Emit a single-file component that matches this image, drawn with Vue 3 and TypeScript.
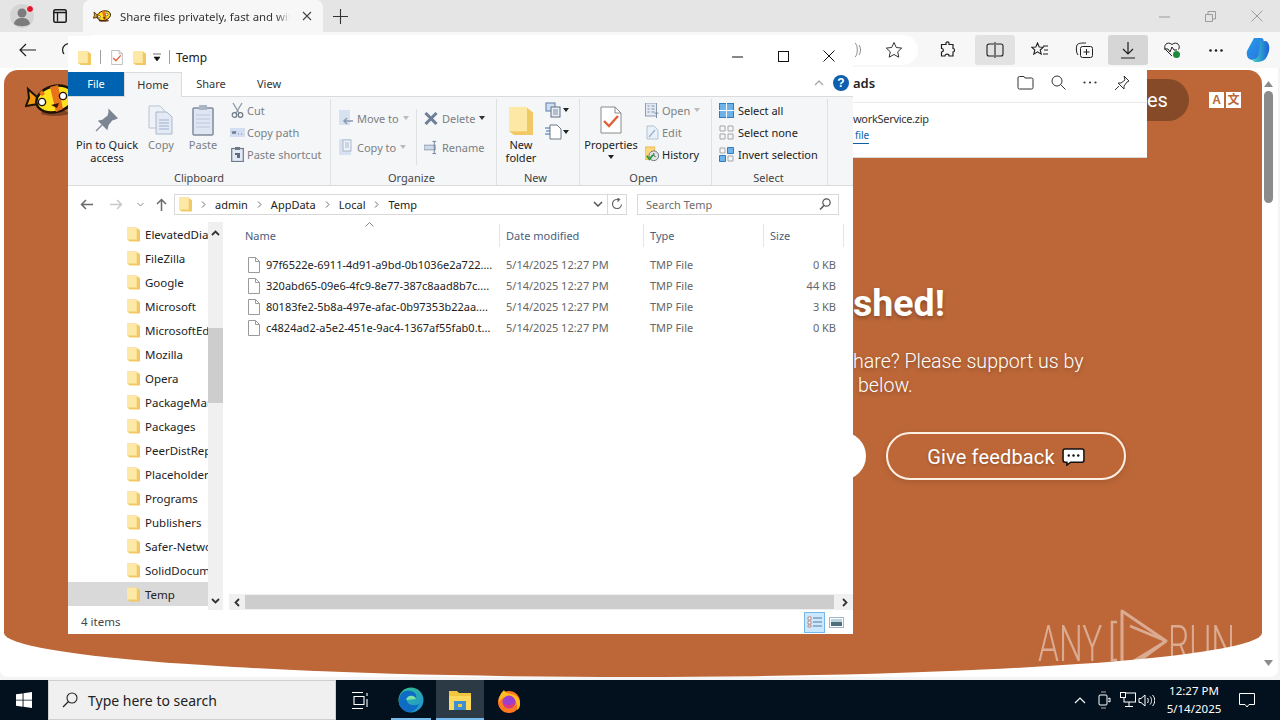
<script setup lang="ts">
// Explorer data
const navFolders = [
  'ElevatedDiagnostics', 'FileZilla', 'Google', 'Microsoft', 'MicrosoftEdge', 'Mozilla', 'Opera',
  'PackageManagement', 'Packages', 'PeerDistRepub', 'Placeholders', 'Programs', 'Publishers',
  'Safer-Networking', 'SolidDocuments', 'Temp',
]

const files = [
  { name: '97f6522e-6911-4d91-a9bd-0b1036e2a722....', size: '0 KB' },
  { name: '320abd65-09e6-4fc9-8e77-387c8aad8b7c....', size: '44 KB' },
  { name: '80183fe2-5b8a-497e-afac-0b97353b22aa....', size: '3 KB' },
  { name: 'c4824ad2-a5e2-451e-9ac4-1367af55fab0.t...', size: '0 KB' },
]

const crumbs = ['admin', 'AppData', 'Local', 'Temp']
</script>

<template>
  <div class="desktop">
    <svg class="defs" width="0" height="0">
      <symbol id="folder" viewBox="0 0 14 16">
        <path d="M0 1h10l4 3v12H3l-3-2z" fill="#f0c965" />
        <path d="M0 1h10.500v13H0z" fill="#fde8a6" />
      </symbol>
      <symbol id="file" viewBox="0 0 14 16">
        <path d="M1.500.5h7l4 4v11h-11z" fill="#fff" stroke="#9a9a9a" />
        <path d="M8.500.5v4h4" fill="none" stroke="#9a9a9a" />
      </symbol>
      <symbol id="candy" viewBox="0 0 50 34">
        <ellipse cx="30" cy="30" rx="14" ry="3" fill="#7d4322" />
        <path d="M13 15L3 6l1 9-3 8 12-2z" fill="#f39a12" stroke="#1d1208" stroke-width="2" />
        <ellipse cx="30" cy="16" rx="19" ry="13" fill="#ffe11e" stroke="#1d1208" stroke-width="2.500" transform="rotate(-15 30 16)" />
        <path d="M25 4l8-2 5 24-7 3z" fill="#e8731a" />
        <path d="M14 10l3-3 3 4-3 2z" fill="#e8731a" />
        <circle cx="17" cy="19" r="3.600" fill="#fff" stroke="#1d1208" stroke-width="1.400" />
        <circle cx="38" cy="13" r="3.600" fill="#fff" stroke="#1d1208" stroke-width="1.400" />
        <path d="M26 22l8-2-2 5z" fill="#3a1505" />
      </symbol>
      <symbol id="checkdoc" viewBox="0 0 22 28">
        <path d="M1 1h14l6 6v20H1z" fill="#fff" stroke="#8a8a8a" />
        <path d="M15 1v6h6" fill="none" stroke="#8a8a8a" />
        <path d="M4 15l5 5 9-10" fill="none" stroke="#e0603a" stroke-width="2.400" />
      </symbol>
    </svg>

    <div class="browser">
      <div class="tabstrip">
        <div class="profile">
          <svg width="26" height="26" viewBox="0 0 26 26">
            <circle cx="12" cy="13" r="12" fill="#d4d4d4" />
            <circle cx="12" cy="10" r="4.500" fill="#7c7c7c" />
            <path d="M4 21c1-5 4-6 8-6s7 1 8 6c-4 3-12 3-16 0z" fill="#7c7c7c" />
            <circle cx="20" cy="6" r="3.500" fill="#e0162b" stroke="#eee" />
          </svg>
        </div>
        <svg class="vtabs" width="14" height="14" viewBox="0 0 14 14">
          <rect x=".8" y=".8" width="12.400" height="12.400" rx="1.500" fill="none" stroke="#1a1a1a" stroke-width="1.500" />
          <path d="M1 3.500h12M4.500 3.500v9" stroke="#1a1a1a" stroke-width="1.300" fill="none" />
        </svg>
        <div class="tab">
          <svg width="18" height="14"><use href="#candy" /></svg>
          <span class="tab-title">Share files privately, fast and with</span>
          <svg class="tab-close" width="10" height="10" viewBox="0 0 10 10"><path d="M1 1l8 8M9 1l-8 8" stroke="#444" stroke-width="1.100" /></svg>
        </div>
        <svg class="newtab" width="15" height="15" viewBox="0 0 15 15"><path d="M7.500 0v15M0 7.500h15" stroke="#333" stroke-width="1.100" /></svg>
        <div class="winctl">
          <svg width="11" height="11" viewBox="0 0 11 11"><path d="M0 6h11" stroke="#9b9b9b" /></svg>
          <svg width="11" height="11" viewBox="0 0 11 11"><path d="M.5 3.500h7v7h-7zM3 3V.5h7.500V8H8" fill="none" stroke="#9b9b9b" /></svg>
          <svg width="12" height="12" viewBox="0 0 12 12"><path d="M.5.5l11 11M11.500.5l-11 11" stroke="#9b9b9b" /></svg>
        </div>
      </div>

      <div class="toolbar">
        <svg class="back" width="18" height="14" viewBox="0 0 18 14"><path d="M17 7H1M7 1L1 7l6 6" fill="none" stroke="#1f1f1f" stroke-width="1.200" /></svg>
        <svg class="reload" width="14" height="14" viewBox="0 0 14 14"><path d="M12 3A6 6 0 102 11" fill="none" stroke="#1f1f1f" stroke-width="1.200" /></svg>
        <div class="urlbar">
          <svg width="14" height="16" viewBox="0 0 14 16"><path d="M2 3c2 1 2 9 0 10M6 1c3 2 3 12 0 14M10 3c2 2 2 8 0 10" fill="none" stroke="#8f8f8f" /></svg>
          <svg width="18" height="18" viewBox="0 0 18 18"><path d="M9 1.500l2.300 5 5.400.6-4 3.700 1.100 5.400L9 13.500l-4.800 2.700 1.100-5.400-4-3.700 5.400-.6z" fill="none" stroke="#333" /></svg>
        </div>
        <div class="tb-btn first">
          <svg width="18" height="18" viewBox="0 0 18 18"><path d="M7 2c0-1.500 3-1.500 3 0v1.500h4v4c2 0 2 3.500 0 3.500v4H10c0-2.500-4-2.500-4 0H2.500v-4c2.500 0 2.500-3.500 0-3.500v-4H7z" fill="none" stroke="#1f1f1f" stroke-width="1.200" /></svg>
        </div>
        <div class="tb-btn on split">
          <svg width="18" height="16" viewBox="0 0 18 16"><path d="M9 0v16M8 2H3a2 2 0 00-2 2v8a2 2 0 002 2h5M10 2h5a2 2 0 012 2v8a2 2 0 01-2 2h-5" fill="none" stroke="#1f1f1f" stroke-width="1.100" /></svg>
        </div>
        <div class="tb-btn fav">
          <svg width="18" height="16" viewBox="0 0 18 16"><path d="M6.500 1l1.700 4 4 .3-3 2.700 1 4.200-3.700-2.300-3.700 2.300 1-4.200-3-2.700 4-.3zM12 4h5M13 8h4M12 12h5" fill="none" stroke="#1f1f1f" stroke-width="1.100" /></svg>
        </div>
        <div class="tb-btn">
          <svg width="18" height="16" viewBox="0 0 18 16"><rect x="5.500" y="4.500" width="12" height="11" rx="2" fill="#f7f7f7" stroke="#1f1f1f" /><path d="M11.500 7v6M8.500 10h6M3 13C1 11 1 5 2 3c1-2 5-2 9-2" fill="none" stroke="#1f1f1f" /></svg>
        </div>
        <div class="tb-btn on dl">
          <svg width="14" height="18" viewBox="0 0 14 18"><path d="M7 1v12M2 8l5 5 5-5M0 17h14" fill="none" stroke="#1f1f1f" stroke-width="1.200" /></svg>
        </div>
        <div class="tb-btn">
          <svg width="18" height="18" viewBox="0 0 18 18"><path d="M9 15L2.500 8.500C0 5 4-.5 9 3.500c5-4 9 1.500 6.500 5" fill="none" stroke="#1f1f1f" /><path d="M1 8h4l2 3 2-5 2 3h3" fill="none" stroke="#1f1f1f" /><circle cx="13.500" cy="13.500" r="3.500" fill="#1e8a3c" /></svg>
        </div>
        <div class="tb-btn dots">
          <svg width="14" height="3" viewBox="0 0 14 3"><circle cx="1.500" cy="1.500" r="1.300" fill="#1f1f1f" /><circle cx="7" cy="1.500" r="1.300" fill="#1f1f1f" /><circle cx="12.500" cy="1.500" r="1.300" fill="#1f1f1f" /></svg>
        </div>
        <div class="tb-btn copilot">
          <svg width="24" height="26" viewBox="0 0 24 26">
            <defs>
              <linearGradient id="cp1" x1="0" y1="0" x2="1" y2="1"><stop offset="0" stop-color="#1fa0e8" /><stop offset="1" stop-color="#2f6fe0" /></linearGradient>
              <linearGradient id="cp2" x1="0" y1="0" x2="1" y2="0"><stop offset="0" stop-color="#3fd6c0" /><stop offset="1" stop-color="#1a5fd8" /></linearGradient>
            </defs>
            <path d="M8 1h7c3 0 3 3 2 6l-4 12c-1 3-3 4-6 4C2 23 0 19 1 14z" fill="url(#cp1)" />
            <path d="M14 4h6c4 2 4 9 2 13-2 6-5 8-12 8-3 0-4-2-3-3 4 0 5-2 6-6z" fill="url(#cp2)" />
          </svg>
        </div>
      </div>

      <div class="page">
        <div class="panel">
          <div class="site-head">
            <svg class="logo" width="50" height="34"><use href="#candy" /></svg>
            <div class="lang-pill">es</div>
            <div class="translate">
              <span class="tr-a">A</span><span class="tr-b">文</span>
            </div>
          </div>
          <div class="hero">
            <h1>shed!</h1>
            <p>hare? Please support us by<br /><span class="indent">below.</span></p>
            <div class="actions">
              <span class="white-pill"></span>
              <button class="feedback">
                Give feedback
                <svg width="23" height="18" viewBox="0 0 24 19">
                  <path d="M3 1h18a2 2 0 012 2v10a2 2 0 01-2 2H9l-4 3v-3H3a2 2 0 01-2-2V3a2 2 0 012-2z" fill="#fff" stroke="#111" stroke-width="1.600" />
                  <circle cx="7" cy="8" r="1.300" fill="#111" /><circle cx="12" cy="8" r="1.300" fill="#111" /><circle cx="17" cy="8" r="1.300" fill="#111" />
                </svg>
              </button>
            </div>
          </div>
        </div>
        <div class="page-scroll">
          <svg width="9" height="6" viewBox="0 0 9 6"><path d="M4.500 0L9 6H0z" fill="#8b8b8b" /></svg>
          <div class="page-thumb"></div>
          <svg class="down" width="9" height="6" viewBox="0 0 9 6"><path d="M4.500 6L9 0H0z" fill="#8b8b8b" /></svg>
        </div>
      </div>
    </div>

    <div class="downloads">
      <div class="dl-head">
        <strong>ads</strong>
        <div class="dl-icons">
          <svg width="17" height="15" viewBox="0 0 17 15"><path d="M1 3a1.500 1.500 0 011.500-1.500H7L8 3h6.500A1.500 1.500 0 0116 4.500v8a1.500 1.500 0 01-1.500 1.500h-12A1.500 1.500 0 011 12.500z" fill="none" stroke="#333" /></svg>
          <svg width="15" height="15" viewBox="0 0 15 15"><circle cx="6" cy="6" r="5" fill="none" stroke="#333" /><path d="M9.500 9.500l5 5" stroke="#333" /></svg>
          <svg width="14" height="3" viewBox="0 0 14 3"><circle cx="1.500" cy="1.500" r="1.100" fill="#333" /><circle cx="7" cy="1.500" r="1.100" fill="#333" /><circle cx="12.500" cy="1.500" r="1.100" fill="#333" /></svg>
          <svg width="16" height="16" viewBox="0 0 16 16"><path d="M10 1l5 5-2 1-3 4 0 3-6-6 3 0 4-3zM5 11l-4 4" fill="none" stroke="#333" /></svg>
        </div>
      </div>
      <div class="dl-item">
        <div class="dl-name">workService.zip</div>
        <a class="dl-link">file</a>
      </div>
    </div>

    <section class="explorer">
      <div class="ex-title">
        <svg width="13" height="15"><use href="#folder" /></svg>
        <i class="vsep"></i>
        <svg class="t-doc" width="12" height="15"><use href="#checkdoc" /></svg>
        <svg width="13" height="15"><use href="#folder" /></svg>
        <svg class="t-arrow" width="8" height="8" viewBox="0 0 8 8"><path d="M0 1h8M1 4h6L4 8z" fill="#111" stroke="#111" stroke-width=".6" /></svg>
        <i class="vsep"></i>
        <span class="ex-name">Temp</span>
        <div class="ex-ctl">
          <svg width="11" height="11" viewBox="0 0 11 11"><path d="M0 6h11" stroke="#111" /></svg>
          <svg width="11" height="11" viewBox="0 0 11 11"><rect x=".5" y=".5" width="10" height="10" fill="none" stroke="#111" /></svg>
          <svg width="12" height="12" viewBox="0 0 12 12"><path d="M.5.5l11 11M11.500.5l-11 11" stroke="#111" /></svg>
        </div>
      </div>

      <div class="ex-tabs">
        <span class="rt file">File</span>
        <span class="rt home">Home</span>
        <span class="rt share">Share</span>
        <span class="rt view">View</span>
        <svg class="collapse" width="10" height="6" viewBox="0 0 10 6"><path d="M1 5l4-4 4 4" fill="none" stroke="#a8a8a8" stroke-width="1.300" /></svg>
        <span class="help">?</span>
      </div>

      <div class="ribbon">
        <div class="rgroup g-clip">
          <div class="rbody">
            <div class="big w-pin">
              <div class="bi"><svg width="24" height="24" viewBox="0 0 24 24"><path d="M14 2l8 8-2 1-3 1-4 5-1 4-8-8 4-1 5-4 1-3zM7 17l-6 6" fill="#7b8692" stroke="#7b8692" stroke-width="1.200" /></svg></div>
              <span class="dark">Pin to Quick<br />access</span>
            </div>
            <div class="big w-copy">
              <div class="bi"><svg width="26" height="30" viewBox="0 0 26 30"><path d="M1 1h11l4 4v18H1z" fill="#eef2f8" stroke="#b9c4d4" /><path d="M8 7h11l5 5v17H8z" fill="#e3eaf5" stroke="#a9b8cc" /><path d="M11 15h10M11 18h10M11 21h10M11 24h10" stroke="#9fb1ca" /></svg></div>
              <span>Copy</span>
            </div>
            <div class="big w-paste">
              <div class="bi"><svg width="22" height="31" viewBox="0 0 22 31"><rect x="1" y="3" width="20" height="27" rx="1" fill="#dfe6f3" stroke="#7f8c9c" stroke-width="1.500" /><rect x="7" y="0" width="8" height="5" fill="#aab6c6" /><path d="M4 10h14M4 14h14M4 18h14M4 22h14" stroke="#bcc8da" /></svg></div>
              <span>Paste</span>
            </div>
            <div class="scol w-clipsmall">
              <div class="si"><svg width="13" height="16" viewBox="0 0 13 16"><path d="M2 1l6 10M11 1L5 11" stroke="#8b97a6" stroke-width="1.300" /><circle cx="3.500" cy="13" r="2.300" fill="none" stroke="#6d7986" stroke-width="1.200" /><circle cx="9.500" cy="13" r="2.300" fill="none" stroke="#6d7986" stroke-width="1.200" /></svg>Cut</div>
              <div class="si"><svg width="15" height="9" viewBox="0 0 15 9"><rect width="15" height="9" fill="#d3def0" /><path d="M2 3l1 3 1-3 1 3 1-3M8 6h1M11 6h1" stroke="#6b7f9c" fill="none" /></svg>Copy path</div>
              <div class="si"><svg width="13" height="15" viewBox="0 0 13 15"><rect x=".7" y="1.500" width="11.600" height="13" fill="#e3eaf5" stroke="#6d7986" stroke-width="1.200" /><rect x="4" y="0" width="5" height="3" fill="#6d7986" /><path d="M4 6h5v5H6V8H4z" fill="#5b6b80" /></svg>Paste shortcut</div>
            </div>
          </div>
          <div class="rlabel">Clipboard</div>
        </div>

        <div class="rgroup g-org">
          <div class="rbody">
            <div class="scol two w-mv">
              <div class="si"><svg width="14" height="16" viewBox="0 0 14 16"><rect width="11" height="15" fill="#d7e1f0" /><path d="M14 11H6M8 8l-3 3 3 3" stroke="#8b9bb0" stroke-width="1.500" fill="none" /></svg>Move to <b class="caret faint"></b></div>
              <div class="si"><svg width="14" height="16" viewBox="0 0 14 16"><rect width="12" height="16" fill="#d7e1f0" /><rect x="4" y="1" width="8" height="11" fill="#eef2f8" stroke="#a9b8cc" /><path d="M6 4h4M6 6h4M6 8h4" stroke="#a9b8cc" /></svg>Copy to <b class="caret faint"></b></div>
            </div>
            <i class="rsep"></i>
            <div class="scol two w-del">
              <div class="si"><svg width="14" height="13" viewBox="0 0 14 13"><path d="M1.500 1l11 11M12.500 1l-11 11" stroke="#6d7f97" stroke-width="3" /></svg>Delete <b class="caret"></b></div>
              <div class="si"><svg width="14" height="15" viewBox="0 0 15 15"><rect y="5" width="12" height="5" fill="#cfdbec" stroke="#8b9bb0" /><path d="M11 1v13M9 1h4M9 14h4" stroke="#6d7f97" fill="none" /></svg>Rename</div>
            </div>
          </div>
          <div class="rlabel">Organize</div>
        </div>

        <div class="rgroup g-new">
          <div class="rbody">
            <div class="big w-newf">
              <div class="bi"><svg width="24" height="30" viewBox="0 0 14 16" preserveAspectRatio="none"><use href="#folder" /></svg></div>
              <span class="dark">New<br />folder</span>
            </div>
            <div class="scol w-newi">
              <div class="si"><svg width="17" height="16" viewBox="0 0 17 16"><rect x="1" y="1" width="9" height="8" fill="#cfe0f2" stroke="#5c7da3" /><rect x="6" y="5" width="9" height="10" fill="#e9eef5" stroke="#5c6f85" /><path d="M8 8h5M8 10h5M8 12h5" stroke="#7d8fa5" /></svg><b class="caret dk"></b></div>
              <div class="si"><svg width="17" height="16" viewBox="0 0 17 16"><path d="M5 1h7l4 4v10H5z" fill="#fff" stroke="#6d7986" /><path d="M0 4h5M1 7h4M0 10h5" stroke="#2f6fb5" /></svg><b class="caret dk"></b></div>
            </div>
          </div>
          <div class="rlabel">New</div>
        </div>

        <div class="rgroup g-open">
          <div class="rbody">
            <div class="big w-prop">
              <div class="bi"><svg width="22" height="28"><use href="#checkdoc" /></svg></div>
              <span class="dark">Properties</span>
              <b class="caret dk"></b>
            </div>
            <div class="scol w-opn">
              <div class="si"><svg width="14" height="15" viewBox="0 0 14 15"><rect width="11" height="13" fill="#e3eaf5" stroke="#8b9bb0" /><path d="M2 3h2M2 6h2M2 9h2M6 3h3M6 6h3M6 9h3" stroke="#7d8fa5" /><path d="M11 9v6M9 11l2-2 2 2" stroke="#7d8fa5" fill="none" /></svg>Open <b class="caret faint"></b></div>
              <div class="si"><svg width="13" height="15" viewBox="0 0 13 15"><path d="M1 1h7l4 4v9H1z" fill="#e9f0f8" stroke="#b3c2d4" /><path d="M3 12l6-7" stroke="#9db6d4" stroke-width="1.500" /></svg>Edit</div>
              <div class="si dark"><svg width="17" height="16" viewBox="0 0 17 16"><rect width="11" height="14" fill="#fbd87a" stroke="#e8b64d" /><circle cx="10" cy="10" r="5.500" fill="#dfe3e8" stroke="#5e6b78" /><path d="M10 7v3l2 1" stroke="#333" fill="none" /><path d="M2 10l3 4 4-5" stroke="#2a9a35" stroke-width="2" fill="none" /></svg>History</div>
            </div>
          </div>
          <div class="rlabel">Open</div>
        </div>

        <div class="rgroup g-sel">
          <div class="rbody">
            <div class="scol w-sel">
              <div class="si dark"><svg width="15" height="15" viewBox="0 0 15 15"><rect x=".5" y=".5" width="14" height="14" fill="#6db2e8" stroke="#2f7cc0" /><path d="M7.500 0v15M0 7.500h15" stroke="#fff" /></svg>Select all</div>
              <div class="si dark"><svg width="15" height="15" viewBox="0 0 15 15"><path d="M1 1h5v5H1zM9 1h5v5H9zM1 9h5v5H1zM9 9h5v5H9z" fill="none" stroke="#a6a6a6" /></svg>Select none</div>
              <div class="si dark"><svg width="15" height="15" viewBox="0 0 15 15"><path d="M1 1h5v5H1zM9 9h5v5H9z" fill="none" stroke="#a6a6a6" /><path d="M8.500.5h6v6h-6zM.5 8.500h6v6h-6z" fill="#6db2e8" stroke="#2f7cc0" /></svg>Invert selection</div>
            </div>
          </div>
          <div class="rlabel">Select</div>
        </div>
      </div>

      <div class="ex-address">
        <svg class="nav-a" width="13" height="11" viewBox="0 0 13 11"><path d="M13 5.500H2M6 1L1.500 5.500 6 10" fill="none" stroke="#6a6a6a" stroke-width="1.500" /></svg>
        <svg class="nav-b" width="13" height="11" viewBox="0 0 13 11"><path d="M0 5.500h11M7 1l4.500 4.500L7 10" fill="none" stroke="#c9c9c9" stroke-width="1.500" /></svg>
        <svg class="nav-c" width="7" height="5" viewBox="0 0 7 5"><path d="M.5 1l3 3 3-3" fill="none" stroke="#8a8a8a" /></svg>
        <svg class="nav-d" width="11" height="13" viewBox="0 0 11 13"><path d="M5.500 13V2M1 6l4.500-4.500L10 6" fill="none" stroke="#6a6a6a" stroke-width="1.500" /></svg>
        <div class="addrbox">
          <svg width="13" height="16"><use href="#folder" /></svg>
          <template v-for="c in crumbs" :key="c">
            <svg class="cr" width="5" height="7" viewBox="0 0 5 7"><path d="M1 .5l3 3-3 3" fill="none" stroke="#6a6a6a" /></svg>
            <span>{{ c }}</span>
          </template>
          <svg class="addr-drop" width="10" height="6" viewBox="0 0 10 6"><path d="M1 1l4 4 4-4" fill="none" stroke="#555" stroke-width="1.500" /></svg>
          <i class="addr-sep"></i>
          <svg class="addr-ref" width="12" height="12" viewBox="0 0 12 12"><path d="M10.500 6.500A4.500 4.500 0 116 1.500h2M6.500 0l2 1.500-2 2" fill="none" stroke="#666" stroke-width="1.200" /></svg>
        </div>
        <div class="searchbox">
          <span>Search Temp</span>
          <svg width="12" height="12" viewBox="0 0 12 12"><circle cx="7.500" cy="4.500" r="3.700" fill="none" stroke="#555" stroke-width="1.200" /><path d="M5 7.500L1 11.500" stroke="#555" stroke-width="1.500" /></svg>
        </div>
      </div>

      <div class="ex-main">
        <aside class="navpane">
          <div class="navlist">
            <div v-for="f in navFolders" :key="f" class="navitem" :class="{ sel: f === 'Temp' }">
              <svg width="13" height="16"><use href="#folder" /></svg>
              <span>{{ f }}</span>
            </div>
          </div>
          <div class="navscroll">
            <svg class="arr" width="9" height="6" viewBox="0 0 9 6"><path d="M1 5l3.500-3.500L8 5" fill="none" stroke="#333" stroke-width="1.800" /></svg>
            <div class="navthumb"></div>
            <svg class="arr bottom" width="9" height="6" viewBox="0 0 9 6"><path d="M1 1l3.500 3.500L8 1" fill="none" stroke="#333" stroke-width="1.800" /></svg>
          </div>
        </aside>

        <div class="listpane">
          <div class="listinner">
            <svg class="sort" width="9" height="5" viewBox="0 0 9 5"><path d="M.5 4.500l4-4 4 4" fill="none" stroke="#8a8a8a" /></svg>
            <div class="row head">
              <span class="name-h">Name</span><span>Date modified</span><span>Type</span><span>Size</span>
            </div>
            <div v-for="f in files" :key="f.name" class="row item">
              <span class="fname"><svg width="14" height="16"><use href="#file" /></svg>{{ f.name }}</span>
              <span>5/14/2025 12:27 PM</span>
              <span>TMP File</span>
              <span class="size">{{ f.size }}</span>
            </div>
          </div>
          <div class="hscroll">
            <svg width="6" height="9" viewBox="0 0 6 9"><path d="M5 1L1.500 4.500 5 8" fill="none" stroke="#333" stroke-width="1.800" /></svg>
            <div class="hthumb"></div>
            <svg width="6" height="9" viewBox="0 0 6 9"><path d="M1 1l3.500 3.500L1 8" fill="none" stroke="#333" stroke-width="1.800" /></svg>
          </div>
        </div>
      </div>

      <div class="ex-status">
        <span>4 items</span>
        <div class="viewbtns">
          <span class="vb active"><svg width="16" height="12" viewBox="0 0 16 12"><path d="M1 1h3v3H1zM1 5h3v3H1zM1 9h3v2H1z" fill="#fff" stroke="#b58a8a" /><path d="M6 2h9M6 6h9M6 10h9" stroke="#5d7a96" /></svg></span>
          <span class="vb"><svg width="15" height="11" viewBox="0 0 15 11"><rect x=".5" y=".5" width="14" height="10" fill="#fff" stroke="#9db4c9" /><rect x="2" y="2" width="11" height="7" fill="#4f6f7d" /><path d="M2 2h11v3H2z" fill="#bcd3e0" /></svg></span>
        </div>
      </div>
    </section>

    <div class="taskbar">
      <div class="start">
        <svg width="16" height="16" viewBox="0 0 16 16"><path d="M0 2.300l6.600-.9v6.300H0zM7.500 1.300L16 0v7.700H7.500zM0 8.500h6.600v6.200L0 13.800zM7.500 8.500H16V16l-8.500-1.200z" fill="#fff" /></svg>
      </div>
      <div class="tsearch">
        <svg width="16" height="16" viewBox="0 0 16 16"><circle cx="10" cy="6" r="5" fill="none" stroke="#222" stroke-width="1.100" /><path d="M6.500 9.500L1 15" stroke="#222" stroke-width="1.300" /></svg>
        <span>Type here to search</span>
      </div>
      <div class="tapp tview">
        <svg width="16" height="17" viewBox="0 0 16 17"><path d="M0 .5h11M0 16.500h11M2 4.500h10v8H2zM15 1v3M15 7v8" fill="none" stroke="#fff" stroke-width="1.100" /></svg>
      </div>
      <div class="tapp run narrow">
        <svg width="26" height="26" viewBox="0 0 26 26">
          <defs>
            <linearGradient id="edgeA" x1="0" y1="0" x2="1" y2="1"><stop offset="0" stop-color="#36c58a" /><stop offset="1" stop-color="#1d8fd8" /></linearGradient>
          </defs>
          <circle cx="13" cy="13" r="12.500" fill="url(#edgeA)" />
          <path d="M1 14C1 6 7 2 13 4c5 1 6 5 5 8H9c-1 5 6 8 12 5-2 5-6 8-9 8-7 0-11-5-11-11z" fill="#0f6cc4" />
          <path d="M8 13c1-4 4-5 7-4s3 3 3 3z" fill="#7fe0a8" />
        </svg>
      </div>
      <div class="tapp run active">
        <svg width="24" height="21" viewBox="0 0 24 21">
          <path d="M1 1h8l2 2h12v16H1z" fill="#f4c63f" />
          <path d="M1 6h22v14H1z" fill="#ffd95e" />
          <path d="M6 11h12v9H6z" fill="#3d8fd1" />
          <path d="M10 14h4v3h-4z" fill="#f4c63f" />
        </svg>
      </div>
      <div class="tapp">
        <svg width="24" height="25" viewBox="0 0 24 25">
          <circle cx="12" cy="14" r="11" fill="#ff7a1f" />
          <path d="M7 2c1 3 4 3 7 4 6 1 9 5 9 10 0 3-1 5-3 6 1-8-3-13-9-13-4 0-7 1-9 5 0-6 2-9 5-12z" fill="#ffbd22" />
          <circle cx="12" cy="14" r="6.500" fill="#9b3fd1" />
          <path d="M6 15c3 3 9 3 12-1-1 5-4 6-6 6-3 0-5-2-6-5z" fill="#e8356e" />
        </svg>
      </div>
      <div class="tray">
        <svg width="12" height="7" viewBox="0 0 12 7"><path d="M1 6l5-5 5 5" fill="none" stroke="#fff" stroke-width="1.100" /></svg>
        <svg class="t2" width="13" height="18" viewBox="0 0 13 18"><path d="M3 1h5M3 17h5" stroke="#aaa" /><rect x="1" y="4" width="8" height="10" rx="1" fill="none" stroke="#fff" /><path d="M10 8l2-1v4l-2-1" fill="none" stroke="#fff" /></svg>
        <svg class="t3" width="16" height="16" viewBox="0 0 16 16"><rect x="4" y="1" width="11.500" height="9" fill="none" stroke="#fff" /><rect x=".5" y=".5" width="5" height="5" fill="#02111d" stroke="#fff" /><path d="M9 10v4M5 14.500h8" stroke="#fff" /></svg>
        <svg class="t4" width="17" height="13" viewBox="0 0 17 13"><path d="M1 4.500h2L7 1v11L3 8.500H1z" fill="none" stroke="#fff" /><path d="M9.500 4c1 1 1 4 0 5M12 2.500c2 2 2 6 0 8M14.500 1c3 3 3 8 0 11" fill="none" stroke="#fff" /></svg>
        <div class="clock"><span>12:27 PM</span><span>5/14/2025</span></div>
        <svg class="note" width="16" height="15" viewBox="0 0 16 15"><path d="M.5.500h15v11H10l-2 2.500-2-2.500H.5z" fill="none" stroke="#fff" /></svg>
      </div>
    </div>

    <div class="watermark">
      <span class="wm-any">ANY</span>
      <svg width="60" height="64" viewBox="0 0 60 64">
        <path d="M7 14H2v38h5" fill="none" stroke="#fff" stroke-width="2.500" />
        <path d="M12 60V3l44 30-30 22" fill="none" stroke="#fff" stroke-width="3" stroke-linejoin="round" />
        <path d="M12 60l44-27M20 18l36 15" fill="none" stroke="#fff" stroke-width="2.500" />
      </svg>
      <span class="wm-run">RUN</span>
    </div>
  </div>
</template>

<style>
html,
body {
  margin: 0;
  background: #fff;
}
</style>

<style scoped>
.desktop {
  position: relative;
  width: 1280px;
  height: 720px;
  display: flex;
  flex-direction: column;
  overflow: hidden;
  font-family: "Noto Sans", "Open Sans", sans-serif;
  font-size: 11px;
  color: #222;
}

.defs {
  position: absolute;
}

.browser {
  flex: 1;
  display: flex;
  flex-direction: column;
  min-height: 0;
  background: #f4f4f4;
}

.tabstrip {
  height: 32px;
  flex: none;
  display: flex;
  align-items: center;
  background: #e5e5e5;
}

.profile {
  width: 26px;
  margin-left: 10px;
  display: flex;
}

.vtabs {
  margin-left: 17px;
}

.tab {
  width: 240px;
  height: 32px;
  margin-left: 16px;
  padding-left: 10px;
  box-sizing: border-box;
  display: flex;
  align-items: center;
  background: #f7f7f7;
  border-radius: 7px 7px 0 0;
  position: relative;
}

.tab-title {
  margin-left: 9px;
  width: 170px;
  overflow: hidden;
  white-space: nowrap;
  font-size: 11.400px;
  color: #333;
  -webkit-mask-image: linear-gradient(90deg, #000 92%, transparent);
  mask-image: linear-gradient(90deg, #000 92%, transparent);
}

.tab-close {
  margin-left: 12px;
}

.newtab {
  margin-left: 10px;
}

.winctl {
  margin-left: auto;
  width: 104px;
  margin-right: 17px;
  display: flex;
  justify-content: space-between;
  align-items: center;
}

.toolbar {
  height: 36px;
  flex: none;
  display: flex;
  align-items: center;
  position: relative;
  background: #f7f7f7;
}

.back {
  margin-left: 19px;
  flex: none;
}

.reload {
  margin-left: 25px;
  flex: none;
}

.urlbar {
  margin-left: 4px;
  width: 838px;
  height: 30px;
  flex: none;
  background: #fff;
  border-radius: 15px;
  display: flex;
  align-items: center;
  justify-content: flex-end;
  gap: 22px;
  padding-right: 15px;
  box-sizing: border-box;
}

.tb-btn {
  width: 40px;
  height: 30px;
  margin-left: 4px;
  display: flex;
  align-items: center;
  justify-content: center;
  border-radius: 3px;
  flex: none;
}

.tb-btn.first {
  margin-left: 10px;
}

.tb-btn.split {
  margin-left: 7px;
}

.tb-btn.fav {
  margin-left: 5px;
}

.tb-btn.on {
  background: #e2e2e2;
}

.tb-btn.dl {
  background: #d6d6d6;
}

.tb-btn.copilot {
  margin-left: 2px;
}

.page {
  flex: 1;
  min-height: 0;
  display: flex;
  margin: 0 2px 3px 0;
  padding: 2px 0 0 4px;
  background: #fff;
  border-radius: 0 0 8px 8px;
}

.panel {
  width: 1258px;
  background: #bd6738;
  border-radius: 14px 14px 50% 50% / 14px 14px 44px 44px;
  color: #fff;
}

.site-head {
  display: flex;
  align-items: center;
  padding: 9px 21px 0;
}

.logo {
  margin-right: auto;
}

.lang-pill {
  width: 110px;
  height: 42px;
  line-height: 42px;
  background: #864a28;
  border-radius: 21px;
  box-sizing: border-box;
  padding-left: 68px;
  font: 20px/42px Roboto, sans-serif;
}

.translate {
  width: 32px;
  margin-left: 20px;
  display: flex;
  gap: 2px;
}

.translate span {
  width: 15px;
  height: 16px;
  background: #fff;
  color: #bd6738;
  font-size: 12px;
  font-weight: 700;
  line-height: 16px;
  text-align: center;
  font-family: "Liberation Sans", "Noto Sans CJK SC", sans-serif;
}

.hero {
  margin-left: 849px;
}

.hero h1 {
  margin: 160px 0 0;
  font: 700 37.500px/44px Roboto, sans-serif;
  text-shadow: 0 2px 4px rgba(0, 0, 0, 0.3);
}

.hero p {
  margin: 25px 0 0;
  font: 300 19.600px/24px Roboto, sans-serif;
  text-shadow: 0 2px 4px rgba(0, 0, 0, 0.3);
}

.indent {
  margin-left: 5px;
}

.actions {
  margin-top: 34px;
  display: flex;
  align-items: center;
}

.white-pill {
  width: 66px;
  height: 48px;
  margin-left: -53px;
  background: #fff;
  border-radius: 24px;
}

.feedback {
  width: 240px;
  height: 48px;
  margin-left: 20px;
  padding: 1px 0 0;
  border: 2px solid #fdf0e2;
  border-radius: 24px;
  background: transparent;
  color: #fff;
  font: 400 20px Roboto, sans-serif;
  letter-spacing: 0.15px;
  display: flex;
  align-items: center;
  justify-content: center;
  gap: 7px;
  box-shadow: 0 2px 6px rgba(0, 0, 0, 0.12);
  text-shadow: 0 1px 3px rgba(0, 0, 0, 0.25);
}

.page-scroll {
  flex: 1;
  display: flex;
  flex-direction: column;
  align-items: flex-start;
  padding: 11px 0 0 2px;
}

.page-thumb {
  width: 9px;
  height: 112px;
  margin-top: 4px;
  background: #8b8b8b;
  border-radius: 5px;
}

.page-scroll .down {
  margin-top: auto;
  margin-bottom: 11px;
}

/* Downloads flyout */
.downloads {
  position: absolute;
  left: 853px;
  top: 67px;
  width: 294px;
  height: 91px;
  background: #fff;
  border-bottom: 1px solid #d8d8d8;
  box-sizing: border-box;
  z-index: 1;
}

.dl-head {
  height: 36px;
  padding-bottom: 4px;
  box-sizing: border-box;
  display: flex;
  align-items: center;
  border-bottom: 1px solid #ebebeb;
  font-size: 13px;
}

.dl-head strong {
  font-weight: 600;
}

.dl-icons {
  margin-left: auto;
  margin-right: 17px;
  width: 113px;
  display: flex;
  justify-content: space-between;
  align-items: center;
}

.dl-item {
  font-size: 11px;
  color: #333;
}

.dl-name {
  margin-top: 8px;
  line-height: 16px;
  letter-spacing: -0.3px;
}

.dl-link {
  display: inline-block;
  margin-top: 1px;
  padding: 0 0 1px 2px;
  font-size: 10px;
  line-height: 14px;
  color: #0f5ea8;
  border-bottom: 1px solid #0f5ea8;
}

/* Explorer window */
.explorer {
  position: absolute;
  left: 68px;
  top: 36px;
  width: 785px;
  height: 598px;
  background: #fff;
  display: flex;
  flex-direction: column;
  z-index: 2;
}

.ex-title {
  height: 36px;
  flex: none;
  box-sizing: border-box;
  display: flex;
  align-items: center;
  padding: 6px 0 0 10px;
  font-size: 12px;
}

.vsep {
  width: 1px;
  height: 14px;
  background: #a0a0a0;
  margin: 0 9px;
}

.t-arrow + .vsep {
  margin-left: 8px;
}

.t-doc {
  margin: 0 10px 0 1px;
}

.t-arrow {
  margin-left: 7px;
}

.ex-name {
  margin-left: -3px;
}

.ex-ctl {
  margin-left: auto;
  margin-right: 18px;
  margin-top: -2px;
  width: 103px;
  display: flex;
  justify-content: space-between;
  align-items: center;
}

.ex-tabs {
  height: 24px;
  flex: none;
  display: flex;
  align-items: stretch;
  position: relative;
  z-index: 1;
}

.rt {
  line-height: 24px;
  text-align: center;
  color: #333;
}

.rt.file {
  width: 56px;
  background: #0063b1;
  color: #fff;
}

.rt.home {
  width: 58px;
  box-sizing: border-box;
  background: #f5f6f7;
  border: 1px solid #dadbdc;
  border-bottom: none;
  height: 25px;
}

.rt.share {
  width: 58px;
}

.rt.view {
  width: 58px;
}

.collapse {
  margin: 8px 0 0 auto;
}

.help {
  width: 16px;
  height: 16px;
  margin: 3px 4px 0 9px;
  border-radius: 50%;
  background: #0e5fb0;
  color: #fff;
  font: 700 12px/16px "Liberation Sans", sans-serif;
  text-align: center;
}

.ribbon {
  height: 90px;
  flex: none;
  box-sizing: border-box;
  display: flex;
  background: #f5f6f7;
  border-top: 1px solid #dadbdc;
  border-bottom: 1px solid #dadbdc;
}

.rgroup {
  display: flex;
  flex-direction: column;
  box-sizing: border-box;
  border-right: 1px solid #dfe0e2;
  margin: 2px 0 0;
  color: #7a7f85;
  flex: none;
}

.g-clip {
  width: 263px;
}

.g-org {
  width: 166px;
}

.g-new {
  width: 83px;
}

.g-open {
  width: 132px;
}

.g-sel {
  width: 116px;
}

.rbody {
  flex: 1;
  display: flex;
  min-height: 0;
}

.rlabel {
  height: 15px;
  line-height: 15px;
  text-align: center;
  color: #444;
}

.g-org .rlabel {
  padding-right: 4px;
}

.g-new .rlabel {
  padding-right: 5px;
}

.g-open .rlabel {
  padding-right: 4px;
}

.g-sel .rlabel {
  padding-right: 2px;
}

.big {
  display: flex;
  flex-direction: column;
  align-items: center;
  text-align: center;
  line-height: 13px;
  flex: none;
}

.bi {
  height: 32px;
  padding: 5px 0 0;
  margin-bottom: 2px;
  display: flex;
  justify-content: center;
  align-items: center;
}

.big .bi svg {
  display: block;
}

.dark {
  color: #222;
}

.w-pin {
  width: 70px;
  margin-left: 4px;
}

.w-copy {
  width: 38px;
}

.w-paste {
  width: 44px;
  margin-left: 1px;
}

.scol {
  display: flex;
  flex-direction: column;
  flex: none;
}

.scol.two {
  padding-top: 8px;
  gap: 7px;
}

.si {
  height: 22px;
  display: flex;
  align-items: center;
  white-space: nowrap;
}

.si svg {
  flex: none;
  margin-right: 4px;
}

.w-clipsmall {
  margin-left: 5px;
}

.w-clipsmall .si svg {
  width: 15px;
  margin-right: 2px;
}

.w-mv {
  margin-left: 8px;
  width: 77px;
}

.rsep {
  width: 1px;
  height: 56px;
  margin-top: 10px;
  background: #dfe0e2;
}

.w-del {
  margin-left: 7px;
}

.caret {
  display: inline-block;
  width: 0;
  height: 0;
  margin-left: 4px;
  border: 3px solid transparent;
  border-top: 4px solid #333;
  border-bottom: none;
}

.caret.faint {
  border-top-color: #bbb;
}

.caret.dk {
  border-top-color: #222;
  margin-left: 0;
}

.si .caret.dk {
  margin-left: -1px;
}

.w-newf {
  width: 48px;
}

.w-newi .si svg {
  margin-right: 2px;
}

.w-prop {
  width: 62px;
}

.w-prop .caret {
  margin-top: 4px;
}

.w-opn {
  margin-left: 3px;
}

.w-opn .si svg {
  width: 15px;
  margin-right: 2px;
}

.w-sel {
  margin-left: 7px;
}

.ex-address {
  height: 36px;
  flex: none;
  display: flex;
  align-items: center;
  position: relative;
}

.nav-a {
  margin-left: 12px;
}

.nav-b {
  margin-left: 17px;
}

.nav-c {
  margin-left: 14px;
}

.nav-d {
  margin-left: 12px;
}

.addrbox {
  margin-left: 7px;
  width: 453px;
  height: 21px;
  box-sizing: border-box;
  border: 1px solid #d9d9d9;
  display: flex;
  align-items: center;
  padding-left: 4px;
  color: #222;
}

.cr {
  margin: 0 9px;
}

.addr-drop {
  margin-left: auto;
}

.addr-sep {
  width: 1px;
  height: 19px;
  background: #d9d9d9;
  margin: 0 3px 0 4px;
}

.addr-ref {
  margin-right: 3px;
}

.searchbox {
  margin-left: 10px;
  width: 202px;
  height: 21px;
  box-sizing: border-box;
  border: 1px solid #d9d9d9;
  display: flex;
  align-items: center;
  justify-content: space-between;
  padding: 0 7px 0 8px;
  color: #6d6d6d;
}

.ex-main {
  flex: 1;
  min-height: 0;
  display: flex;
}

.navpane {
  width: 155px;
  flex: none;
  display: flex;
}

.navlist {
  width: 140px;
  overflow: hidden;
  flex: none;
}

.navitem {
  height: 24px;
  display: flex;
  align-items: center;
  padding-left: 59px;
  gap: 5px;
  white-space: nowrap;
  overflow: hidden;
  font-size: 11.500px;
}

.navitem svg {
  flex: none;
}

.navitem.sel {
  background: #d9d9d9;
}

.navscroll {
  width: 15px;
  background: #f0f0f0;
  display: flex;
  flex-direction: column;
  align-items: center;
  position: relative;
}

.navscroll .arr {
  margin-top: 8px;
}

.navscroll .arr.bottom {
  margin-top: auto;
  margin-bottom: 6px;
}

.navthumb {
  width: 15px;
  height: 75px;
  margin-top: 92px;
  background: #cdcdcd;
  flex: none;
}

.listpane {
  flex: 1;
  min-width: 0;
  display: flex;
  flex-direction: column;
}

.listinner {
  flex: 1;
  position: relative;
  padding: 2px 0 0 15px;
}

.sort {
  position: absolute;
  left: 142px;
  top: 0;
}

.row {
  display: grid;
  grid-template-columns: 261px 144px 120px 80px 1px;
  align-items: center;
  white-space: nowrap;
}

.row span {
  padding-left: 7px;
  overflow: hidden;
}

.head {
  height: 23px;
  margin-bottom: 7px;
  color: #4c607a;
}

.head span {
  line-height: 23px;
  box-sizing: border-box;
}

.head span + span {
  border-left: 1px solid #e5e5e5;
  padding-left: 6px;
}

.head::after {
  content: "";
  height: 23px;
  background: #e5e5e5;
}

.item {
  height: 21px;
  color: #666;
}

.row .fname {
  display: flex;
  align-items: center;
  gap: 5px;
  padding-left: 9px;
  color: #222;
}

.fname svg {
  flex: none;
}

.row .size {
  text-align: right;
  padding-right: 7px;
}

.hscroll {
  height: 16px;
  flex: none;
  margin-left: 6px;
  background: #f0f0f0;
  display: flex;
  align-items: center;
}

.hscroll svg {
  width: 16px;
  flex: none;
}

.hthumb {
  flex: 1;
  height: 14px;
  background: #cdcdcd;
  margin-right: 3px;
}

.ex-status {
  height: 24px;
  flex: none;
  box-sizing: border-box;
  display: flex;
  align-items: center;
  padding: 0 0 2px 13px;
  color: #444;
  font-size: 11.500px;
}

.viewbtns {
  margin: 2px 6px 0 auto;
  display: flex;
  gap: 1px;
}

.vb {
  width: 19px;
  height: 19px;
  display: flex;
  align-items: center;
  justify-content: center;
  border: 1px solid transparent;
}

.vb.active {
  background: #cce8ff;
  border-color: #75b7e8;
}

/* Taskbar */
.taskbar {
  height: 40px;
  flex: none;
  display: flex;
  align-items: center;
  background: #02111d;
}

.start {
  width: 48px;
  height: 40px;
  padding-left: 16px;
  box-sizing: border-box;
  display: flex;
  align-items: center;
}

.tsearch {
  width: 288px;
  height: 40px;
  box-sizing: border-box;
  background: #f0f0f0;
  border: 1px solid #cfcfcf;
  display: flex;
  align-items: center;
  padding-left: 13px;
  gap: 10px;
  font-size: 14px;
  color: #222;
}

.tapp {
  width: 48px;
  height: 40px;
  margin-right: 1px;
  display: flex;
  align-items: center;
  justify-content: center;
  box-sizing: border-box;
}

.tapp.tview {
  margin-right: 7px;
}

.tapp.narrow {
  width: 40px;
  margin-right: 5px;
}

.tapp.run {
  border-bottom: 2px solid #76b9ed;
  padding-top: 2px;
}

.tapp.active {
  background: #2c3a45;
}

.tray {
  margin-left: auto;
  height: 40px;
  display: flex;
  align-items: center;
  padding-right: 25px;
  color: #fff;
}

.t2 {
  margin-left: 12px;
}

.t3 {
  margin-left: 9px;
}

.t4 {
  margin-left: 2px;
}

.clock {
  width: 60px;
  margin-left: 9px;
  display: flex;
  flex-direction: column;
  align-items: center;
  font-size: 11.500px;
  line-height: 18px;
}

.note {
  margin-left: 15px;
}

/* Watermark */
.watermark {
  position: absolute;
  left: 1038px;
  top: 608px;
  width: 194px;
  height: 64px;
  z-index: 3;
  display: flex;
  align-items: center;
  opacity: 0.45;
  color: #fff;
  pointer-events: none;
  font: 300 50px/1 Roboto, sans-serif;
}

.wm-any,
.wm-run {
  display: block;
  width: 66px;
  flex: none;
  transform: scaleX(0.67);
  transform-origin: left center;
  white-space: nowrap;
  margin-top: 8px;
}

.wm-run {
  margin-left: -2px;
  width: 60px;
}

.watermark svg {
  flex: none;
  margin-left: 6px;
}
</style>
